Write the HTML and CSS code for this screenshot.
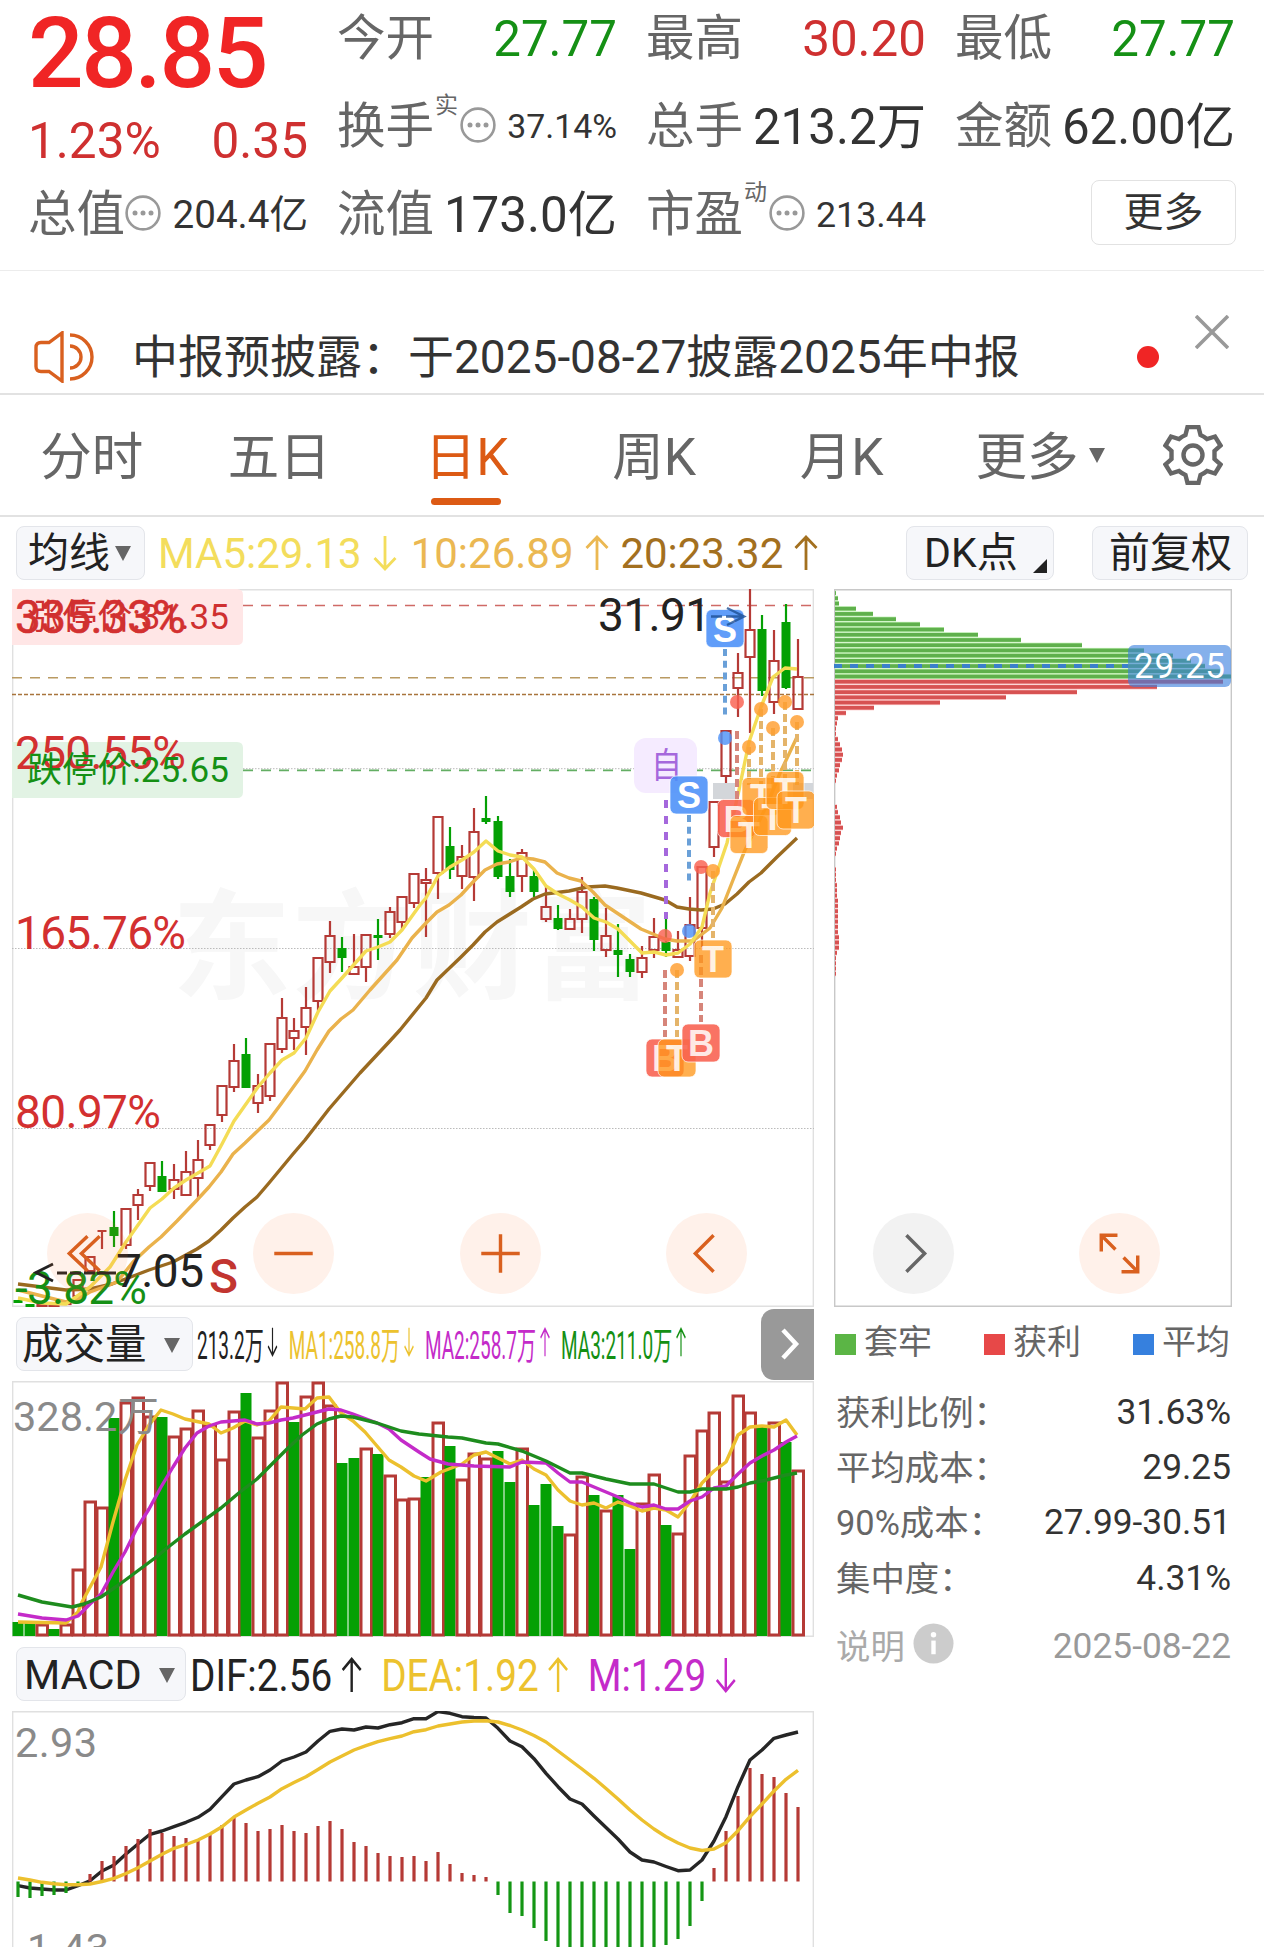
FILE: index.html
```html
<!DOCTYPE html>
<html lang="zh-CN">
<head>
    <meta charset="UTF-8">
    <meta name="viewport" content="width=device-width, initial-scale=1.0">
    <title>日K</title>
    <link rel="stylesheet" href="styles.css">
</head>
<body>
    <svg width="0" height="0" class="defs">
        <symbol id="dots" viewBox="0 0 36 36">
            <circle cx="18" cy="18" r="16.4" fill="none" stroke="#999" stroke-width="2.6"/>
            <circle cx="10" cy="18" r="2.5" fill="#999"/><circle cx="18" cy="18" r="2.5" fill="#999"/><circle cx="26" cy="18" r="2.5" fill="#999"/>
        </symbol>
        <symbol id="up" viewBox="0 0 24 36">
            <path d="M12 35V2M1.500 13L12 2L22.500 13" fill="none" stroke="currentColor" stroke-width="2.800"/>
        </symbol>
        <symbol id="down" viewBox="0 0 24 36">
            <path d="M12 1V34M1.500 23L12 34L22.500 23" fill="none" stroke="currentColor" stroke-width="2.800"/>
        </symbol>
    </svg>

    <!-- Quote -->
    <div class="quote">
        <div class="price-box">
            <div class="price">28.85</div>
            <div class="change"><span>1.23%</span><span>0.35</span></div>
        </div>
        <div class="cell"><span>今开</span><b class="green">27.77</b></div>
        <div class="cell"><span>最高</span><b class="red">30.20</b></div>
        <div class="cell"><span>最低</span><b class="green">27.77</b></div>
        <div class="cell"><span>换手</span><sup>实</sup><svg class="dots"><use href="#dots"/></svg><b class="v34">37.14%</b></div>
        <div class="cell"><span>总手</span><b>213.2万</b></div>
        <div class="cell"><span>金额</span><b>62.00亿</b></div>
        <div class="cell"><span>总值</span><svg class="dots"><use href="#dots"/></svg><b class="v38">204.4亿</b></div>
        <div class="cell"><span>流值</span><b>173.0亿</b></div>
        <div class="cell"><span>市盈</span><sup>动</sup><svg class="dots"><use href="#dots"/></svg><b class="v35">213.44</b></div>
        <div class="cell"><button class="more">更多</button></div>
    </div>

    <!-- Notice -->
    <div class="notice">
        <svg class="speaker" viewBox="0 0 60 52" fill="none" stroke="#d9601f" stroke-width="3.4">
            <path d="M28 2V50L15 40.500H7Q2 40.500 2 35.500V16.500Q2 11.500 7 11.500H15Z"/>
            <path d="M36 15A11 11 0 0 1 36 37M36 4A22 22 0 0 1 36 48"/>
        </svg>
        <span class="notice-text">中报预披露：于2025-08-27披露2025年中报</span>
        <i class="dot"></i>
        <svg class="close" viewBox="0 0 34 34"><path d="M1 1L33 33M33 1L1 33" stroke="#999" stroke-width="3.600"/></svg>
    </div>

    <!-- Period tabs -->
    <div class="tabs">
        <span>分时</span>
        <span>五日</span>
        <span class="active">日K</span>
        <span>周K</span>
        <span>月K</span>
        <span class="tab-more">更多<i class="tri"></i></span>
        <svg class="gear" viewBox="-30 -30 60 60" fill="none" stroke="#666" stroke-width="4.4">
            <path d="M-5.500 -28H5.500L7.500 -20Q11 -18.500 14 -16L22 -18.500L27.500 -9.500L21.500 -4V4L27.500 9.500L22 18.500L14 16Q11 18.500 7.500 20L5.500 28H-5.500L-7.500 20Q-11 18.500 -14 16L-22 18.500L-27.500 9.500L-21.500 4V-4L-27.500 -9.500L-22 -18.500L-14 -16Q-11 -18.500 -7.500 -20Z"/>
            <circle r="9.500"/>
        </svg>
    </div>

    <div class="ma-bar">
        <button class="pill pill-ma">均线<i class="tri"></i></button>
        <span class="ma5">MA5:29.13<svg class="arr"><use href="#down"/></svg></span>
        <span class="ma10">10:26.89<svg class="arr"><use href="#up"/></svg></span>
        <span class="ma20">20:23.32<svg class="arr"><use href="#up"/></svg></span>
        <button class="pill pill-dk">DK点<i class="corner"></i></button>
        <button class="pill pill-fq">前复权</button>
    </div>

    <div class="main">
        <div class="left">
            <svg id="kline" class="kline" viewBox="12 589 802 718"></svg>

            <div class="ind-bar">
                <button class="pill pill-vol">成交量<i class="tri"></i></button>
                <div class="vol-values">
                    <span class="c-black">213.2万<svg class="arr"><use href="#down"/></svg></span>
                    <span class="c-yellow">MA1:258.8万<svg class="arr"><use href="#down"/></svg></span>
                    <span class="c-purple">MA2:258.7万<svg class="arr"><use href="#up"/></svg></span>
                    <span class="c-green">MA3:211.0万<svg class="arr"><use href="#up"/></svg></span>
                </div>
                <div class="next"><svg viewBox="0 0 20 32"><path d="M3 2L16 16L3 30" fill="none" stroke="#fff" stroke-width="4.500"/></svg></div>
            </div>
            <svg id="volume" class="volume" viewBox="12 1381 802 256"></svg>

            <div class="ind-bar">
                <button class="pill pill-macd">MACD<i class="tri"></i></button>
                <div class="macd-values">
                    <span class="c-black">DIF:2.56<svg class="arr"><use href="#up"/></svg></span>
                    <span class="c-yellow">DEA:1.92<svg class="arr"><use href="#up"/></svg></span>
                    <span class="c-purple">M:1.29<svg class="arr"><use href="#down"/></svg></span>
                </div>
            </div>
            <svg id="macd" class="macd" viewBox="12 1711 802 236"></svg>
        </div>

        <div class="right">
            <svg id="chips" class="chips" viewBox="834 589 398 718"></svg>
            <div class="legend">
                <span><i class="sq sq-green"></i>套牢</span>
                <span><i class="sq sq-red"></i>获利</span>
                <span><i class="sq sq-blue"></i>平均</span>
            </div>
            <div class="row"><span>获利比例：</span><b>31.63%</b></div>
            <div class="row"><span>平均成本：</span><b>29.25</b></div>
            <div class="row"><span>90%成本：</span><b>27.99-30.51</b></div>
            <div class="row"><span>集中度：</span><b>4.31%</b></div>
            <div class="row row-note"><span>说明<svg class="info" viewBox="0 0 42 42"><circle cx="21" cy="21" r="20.500" fill="#ccc"/><circle cx="21" cy="12" r="2.800" fill="#fff"/><path d="M21 18V32" stroke="#fff" stroke-width="4.500"/></svg></span><b>2025-08-22</b></div>
        </div>

        <!-- Floating chart controls -->
        <div class="controls">
            <svg viewBox="-40 -40 80 80"><path d="M0 -17L-18 0L0 17M12 -17L-6 0L12 17"/></svg>
            <svg viewBox="-40 -40 80 80"><path d="M-19 0H19"/></svg>
            <svg viewBox="-40 -40 80 80"><path d="M-19 0H19M0 -19V19"/></svg>
            <svg viewBox="-40 -40 80 80"><path d="M7 -18L-11 0L7 18"/></svg>
            <svg class="gray" viewBox="-40 -40 80 80"><path d="M-7 -18L11 0L-7 18"/></svg>
            <svg viewBox="-40 -40 80 80"><path d="M-18 -2V-18H-2M-18 -18L-4 -4M18 2V18H2M18 18L4 4"/></svg>
        </div>
    </div>

    <script src="charts.js"></script>
</body>
</html>
```
FILE: styles.css
```css
* { box-sizing: border-box; }
body { margin: 0; width: 1264px; height: 1947px; overflow: hidden; background: #fff; color: #333; font-family: Roboto, 'Noto Sans CJK SC', sans-serif; }
b { font-weight: 400; }
button { font-family: inherit; padding: 0; }
svg { display: block; flex: none; }
.defs { position: absolute; }
.green { color: #159015; }
.red { color: #cf3030; }

.quote { display: grid; grid-template-columns: repeat(4, 280px); grid-template-rows: 78px 97px 80px; column-gap: 29px; padding: 0 29px 15px 28px; height: 271px; border-bottom: 1px solid #ececec; }
.price-box { grid-row: 1 / 3; color: #f02525; }
.price { height: 105px; line-height: 108px; font-size: 98px; font-weight: 500; letter-spacing: -2.4px; white-space: nowrap; }
.change { display: flex; justify-content: space-between; color: #cf3030; font-size: 49.5px; line-height: 72px; }
.cell { display: flex; align-items: center; font-size: 49.3px; line-height: 70px; white-space: nowrap; }
.cell span { color: #666; font-size: 48.5px; }
.cell b { margin-left: auto; }
.cell sup { align-self: flex-start; color: #666; font-size: 23px; line-height: 30px; margin: 13px 2px 0 1px; }
.cell:nth-child(n+9) sup { margin-top: 3px; }
.dots { width: 36px; height: 36px; margin-top: -4px; }
.cell .v34 { font-size: 33.8px; }
.cell .v35 { font-size: 35.8px; }
.cell .v38 { font-size: 38.6px; }
.more { width: 145px; height: 65px; margin: -5px -1px 0 auto; border: 1.5px solid #e2e2e2; border-radius: 8px; background: #fff; color: #333; font-size: 40px; line-height: 60px; }

.notice { display: flex; align-items: center; height: 124px; padding: 49px 0 0 34px; border-bottom: 2px solid #e2e2e2; }
.speaker { width: 60px; height: 52px; }
.notice-text { flex: 0 0 1004px; margin: -7px 0 0 38px; padding-right: 1px; font-size: 46px; white-space: nowrap; }
.dot { width: 22px; height: 22px; margin-left: 1px; border-radius: 50%; background: #f02525; }
.close { width: 34px; height: 34px; margin: -50px 0 0 36px; }

.tabs { display: flex; align-items: center; height: 122px; border-bottom: 2px solid #e2e2e2; color: #666; font-size: 51.5px; }
.tabs span { position: relative; left: -2px; flex: 0 0 187.5px; line-height: 119px; padding-top: 5px; text-align: center; }
.tabs .active { color: #dc5a14; }
.active::after { content: ""; position: absolute; left: 58px; top: 105px; width: 70px; height: 7px; border-radius: 4px; background: #dc5a14; }
.tabs .tab-more { flex-basis: 209px; }
.tri { display: inline-block; border: 8.5px solid transparent; border-top: 15px solid #666; border-bottom: 0; }
.tab-more .tri { margin-left: 10px; vertical-align: 12px; }
.gear { width: 60px; height: 60px; margin-left: 16px; }

.ma-bar { display: flex; align-items: center; height: 72px; padding: 0 16px; font-size: 42px; white-space: nowrap; }
.ma-bar span { display: flex; align-items: center; }
.arr { width: 24px; height: 36px; margin-left: 11px; }
.ma5 { color: #f3dd5c; margin-left: 13px; width: 253px; }
.ma10 { color: #ebb852; width: 210px; }
.ma20 { color: #a3701f; width: 286px; }
.pill { flex: none; display: flex; align-items: center; height: 54px; border: 1.5px solid #e3e5ea; border-radius: 8px; background: #f6f7fa; color: #222; font-size: 41px; line-height: 50px; white-space: nowrap; }
.pill-ma { width: 129px; padding-left: 11px; }
.pill-ma .tri { margin-left: 5px; }
.pill-dk { position: relative; width: 148px; padding-left: 17px; }
.corner { position: absolute; right: 6px; bottom: 6px; border-left: 14px solid transparent; border-bottom: 14px solid #222; }
.pill-fq { width: 156px; padding-left: 16px; margin-left: 38px; }

.main { position: relative; display: flex; }
.left { width: 802px; margin-left: 12px; }
.right { width: 398px; margin-left: 20px; }
.kline { width: 802px; height: 718px; }
.volume { width: 802px; height: 256px; }
.macd { width: 802px; height: 236px; }
.chips { width: 398px; height: 718px; }

.ind-bar { display: flex; align-items: center; height: 74px; white-space: nowrap; }
.ind-bar .pill { margin-left: 4px; padding-top: 2px; }
.pill-vol { width: 177px; padding-left: 5px; font-size: 41.5px; }
.pill-vol .tri { margin-left: 17px; }
.pill-macd { width: 170px; padding-left: 7px; font-size: 41.5px; }
.pill-macd .tri { margin-left: 17px; }
.vol-values, .macd-values { display: flex; width: 0; flex: none; transform-origin: left center; }
.vol-values { margin: -4px 0 0 4px; transform: scaleX(.5); font-size: 38px; }
.macd-values { margin: 2px 0 0 4px; transform: scaleX(.86); font-size: 45px; }
.vol-values span, .macd-values span { display: flex; align-items: center; flex: none; }
.vol-values .arr { height: 30px; margin: 0 20px 0 6px; }
.macd-values .arr { margin: 0 22px 0 11px; }
.c-black { color: #222; }
.c-yellow { color: #ecc22e; }
.c-purple { color: #c42bc9; }
.c-green { color: #149014; }
.next { display: flex; align-items: center; justify-content: center; width: 53px; height: 71px; margin-left: auto; padding-left: 4px; border-radius: 13px 0 0 13px; background: #999; }
.next svg { width: 20px; height: 32px; }

.legend { display: flex; justify-content: space-between; height: 77px; line-height: 70px; font-size: 34px; color: #666; padding: 0 2px 0 1px; }
.sq { display: inline-block; width: 21px; height: 21px; margin-right: 8px; vertical-align: -1px; }
.sq-green { background: #5bb545; }
.sq-red { background: #e74848; }
.sq-blue { background: #3680de; }
.row { display: flex; justify-content: space-between; align-items: center; height: 55.3px; padding: 0 1px 0 2px; font-size: 34.4px; color: #666; }
.row b { color: #333; font-size: 35.3px; }
.row span { display: flex; align-items: center; margin-top: -4px; }
.row-note { height: 81px; color: #aaa; }
.row-note b { color: #999; }
.info { width: 41px; height: 41px; margin-left: 8px; }

.controls { position: absolute; left: 47px; top: 624px; width: 1113px; display: flex; justify-content: space-between; }
.controls svg { width: 81px; height: 81px; border-radius: 50%; background: rgba(255, 120, 50, .1); fill: none; stroke: #d9601f; stroke-width: 3.4; }
.controls .gray { background: #f2f2f2; stroke: #666; }

/* chart texts */
.pct { font-size: 46px; fill: #d33030; }
.axis { font-size: 41.5px; fill: #8a8a8a; }
.tag { font-size: 35px; }
.mark { font-size: 46px; fill: #222; }
.badge { font: 700 36px 'Liberation Sans', sans-serif; fill: #fff; text-anchor: middle; }
.watermark { font-size: 119px; font-weight: 700; fill: #f7f7f7; }
```
FILE: charts.js
```js
const RED = '#b53a36', GREEN = '#04a004';
const X0 = 18, STEP = 12;
const cx = i => X0 + STEP * i;

const line = (pts, color, w = 3.4) =>
    `<polyline points="${pts}" fill="none" stroke="${color}" stroke-width="${w}" stroke-linejoin="round"/>`;
const hline = (x1, x2, y, color, dash, w = 1) =>
    `<path d="M${x1} ${y}H${x2}" stroke="${color}" stroke-width="${w}" stroke-dasharray="${dash}"/>`;
const vdash = (x, y1, y2, color, dash = '8 4') =>
    `<path d="M${x} ${y1}V${y2}" stroke="${color}" stroke-width="4" stroke-dasharray="${dash}"/>`;
const text = (x, y, cls, s, extra = '') => `<text x="${x}" y="${y}" class="${cls}" ${extra}>${s}</text>`;

// [colour, body top, body bottom, high, low]
const candles = [
    ['g',1300,1303,1300,1303],['g',1304,1307,1304,1307],['r',1305,1306,1305,1306],['r',1305,1306,1305,1306],['r',1303,1304,1303,1304],
    ['r',1280,1296,1279,1297],['r',1257,1271,1256,1271],['r',1231,1231,1231,1249],['g',1227,1236,1211,1247],['r',1209,1245,1208,1249],
    ['r',1195,1205,1189,1220],['r',1163,1186,1163,1191],['g',1176,1192,1161,1192],['r',1180,1189,1164,1199],['r',1172,1195,1151,1195],
    ['r',1160,1178,1140,1200],['r',1125,1145,1125,1150],['r',1086,1115,1086,1122],['r',1061,1087,1044,1092],['g',1054,1088,1038,1088],
    ['r',1086,1103,1074,1113],['r',1044,1096,1044,1101],['r',1018,1049,998,1053],['r',1031,1038,1018,1050],['r',1008,1027,987,1055],
    ['r',958,1001,958,1011],['r',936,962,921,973],['g',948,958,937,972],['r',967,974,934,974],['r',935,967,935,982],
    ['g',935,938,919,960],['r',912,934,907,938],['r',897,922,896,930],['r',874,903,874,908],['r',880,883,868,937],
    ['r',817,873,817,899],['g',846,870,827,879],['r',857,876,845,889],['r',832,877,808,901],['g',818,822,796,824],
    ['g',821,877,816,879],['g',876,892,859,897],['r',853,876,849,892],['g',876,892,869,897],['r',907,919,886,922],
    ['g',918,929,905,930],['r',919,929,909,929],['r',892,919,877,933],['g',899,940,897,951],['r',936,950,908,957],
    ['g',950,955,924,977],['g',959,972,954,977],['r',958,972,946,978],['r',937,950,918,958],['g',942,951,919,957],
    ['r',950,957,931,957],['r',925,956,897,961],['r',867,928,867,947],['r',802,847,802,857],['r',731,776,730,783],
    ['r',673,688,653,717],['r',630,657,589,733],['g',629,691,615,696],['r',661,702,630,714],['g',622,688,604,689],['r',677,709,639,709]
];

function drawKline() {
    let s = `<path d="M12.500 1307V589.500H813.500V1306.500H12" fill="none" stroke="#e0e0e0" stroke-width="1.800"/>`;
    s += text(172, 990, 'watermark', '东方财富', 'textLength="480"');
    for (const y of [768.7, 948.5, 1128.5]) s += hline(12, 814, y, '#bbb', '1.5 1.5');
    s += `<path d="M12 589H237Q243 589 243 595V639Q243 645 237 645H12Z" fill="#ffe6e6"/>`;
    s += `<path d="M12 742H237Q243 742 243 748V792Q243 798 237 798H12Z" fill="#e2f3e4"/>`;
    s += hline(243, 814, 605.5, '#cf6a66', '10 8', 1.5);
    s += hline(12, 814, 677.7, '#b99a62', '10 8', 1.5);
    s += hline(12, 814, 694.5, '#a8743c', '4 2', 1.3);
    s += hline(243, 814, 770.3, '#63ae63', '10 8', 1.8);
    s += `<path d="M713 783H735V799H713ZM793 783H813V799H793Z" fill="#d3d6da"/>`;
    s += `<rect x="634" y="738" width="63" height="55" rx="12" fill="#f5ebff"/>`;
    s += text(651, 778, 'tag', '自', 'fill="#a568dc" textLength="31" lengthAdjust="spacingAndGlyphs"');

    candles.forEach(([c, top, bottom, high, low], i) => {
        const x = cx(i);
        if (c === 'g') {
            s += `<path d="M${x} ${high}V${low}" stroke="${GREEN}" stroke-width="2.2"/><rect x="${x - 4.5}" y="${top}" width="9" height="${bottom - top}" fill="${GREEN}"/>`;
        } else {
            s += `<path d="M${x} ${high}V${top}M${x} ${bottom}V${low}M${x - 4.5} ${top}H${x + 4.5}V${bottom}H${x - 4.5}Z" fill="none" stroke="${RED}" stroke-width="2.2"/>`;
        }
    });

    // MA20, MA10, MA5
    s += line('18,1284 42,1287 66,1290 90,1289 112,1284 136,1275 149,1270 173,1262 197,1249 209,1241 221,1230 233,1218 245,1207 257,1197 269,1183 293,1154 305,1140 329,1109 360,1073 389,1042 400,1030 426,998 437,980 461,957 473,945 485,932 497,922 521,907 533,899 545,894 569,891 587,887 605,886 617,888 641,893 665,900 677,907 689,909 701,910 713,909 725,904 737,894 749,882 761,873 777,857 797,838', '#9a6a20');
    s += line('18,1290 42,1296 66,1302 78,1299 90,1292 117,1282 133,1262 149,1247 161,1237 177,1221 197,1200 209,1187 221,1172 233,1154 245,1143 269,1120 281,1104 305,1071 317,1050 329,1031 341,1019 353,1010 370,990 397,960 412,938 426,923 437,912 449,905 461,895 473,882 485,870 497,864 509,862 521,858 533,859 545,862 557,873 569,878 581,881 593,892 605,905 617,913 629,921 641,929 653,934 665,939 677,941 693,941 710,928 722,908 733,880 745,850 767,805 780,773 797,737', '#eab24c');
    s += line('18,1298 42,1303 66,1304 90,1287 110,1267 126,1242 150,1208 162,1199 174,1188 186,1180 210,1166 222,1144 234,1121 246,1104 258,1087 270,1073 282,1060 294,1053 306,1038 318,1012 330,991 342,978 358,960 366,951 378,947 390,942 402,930 420,905 426,898 438,876 450,867 462,860 474,852 486,841 498,851 510,855 522,857 534,869 546,886 558,894 570,900 582,907 594,918 606,922 618,929 630,941 642,953 654,952 666,955 678,953 690,944 702,927 710,893 727,843 739,790 749,742 761,707 773,677 785,668 797,669', '#f4dc55');

    s += text(15, 633, 'pct', '335.33%', 'textLength="171" stroke="#d33030" stroke-width=".6"');
    s += text(27, 629, 'tag', '涨停价:31.35', 'fill="#cf3030" textLength="202"');
    s += text(15, 769, 'pct', '250.55%', 'textLength="171"');
    s += text(27, 782, 'tag', '跌停价:25.65', 'fill="#159015" textLength="202"');
    s += text(15, 948.6, 'pct', '165.76%', 'textLength="171"');
    s += text(15, 1128, 'pct', '80.97%', 'textLength="146"');
    s += text(15, 1303.5, 'pct', '-3.82%', 'style="fill:#159015" textLength="132"');

    // stems from candle to badge
    s += vdash(666, 800, 919, '#a568dc', '8 8');
    s += vdash(689, 815, 882, '#6aa0d8', '7 4.7') + vdash(725, 649, 716, '#6aa0d8', '7 4.7');
    s += vdash(737, 731, 800, '#d6857a') + vdash(665, 970, 1037, '#d6857a') + vdash(701, 955, 1022, '#d6857a');
    s += vdash(677, 970, 1037, '#e4b46a') + vdash(713, 871, 938, '#e4b46a');
    [[749,747],[761,709],[773,728],[785,702],[797,722]].forEach(([x, y]) => s += vdash(x, y, 785, '#e4b46a'));
    const dots = { '#f9604f': [[737,702],[701,867],[665,936]], '#ff9d2e': [[749,747],[761,709],[773,728],[785,702],[797,722],[713,871],[677,970]], '#4f93f7': [[725,738],[689,931]] };
    for (const color in dots) dots[color].forEach(([x, y]) => s += `<circle cx="${x}" cy="${y}" r="7" fill="${color}" opacity=".82"/>`);

    s += text(598, 631, 'mark', '31.91', 'textLength="113"');
    s += `<path d="M53 1264L36 1272.500L53 1281M57 1273H67M70 1273H81M84 1273H95M97 1273H116" fill="none" stroke="#222" stroke-width="2.800"/>`;
    s += text(116, 1287, 'mark', '7.05', 'textLength="88"');
    s += text(209, 1293, 'mark', 'S', 'style="fill:#c23530;font-weight:500;font-size:48px"');

    const fill = { B: '#f8604f', T: '#ff9618', S: '#4a90f8' };
    [['B',665,1058],['T',677,1058],['B',701,1043],['T',713,959],['B',736.5,818.500],['T',749,834.500],['T',761,796.500],['T',772.500,816.500],
     ['T',785,790.500],['T',796,810],['S',689,795],['S',725,628.500]].forEach(([c, x, y]) => {
        s += `<rect x="${x - 19}" y="${y - 19}" width="38" height="38" rx="6" fill="${fill[c]}" fill-opacity="${c === 'T' ? .76 : .88}" stroke="#fff" stroke-opacity=".7"/>`;
        s += text(x, y + 13, 'badge', c, `fill-opacity="${c === 'S' ? 1 : .85}"`);
    });
    s += `<path d="M711 616.500H722M726 616.500H744M727 608L744 616.500L727 625" fill="none" stroke="#1d4f94" stroke-width="2.500" stroke-opacity=".8"/>`;
    document.getElementById('kline').innerHTML = s;
}

function drawVolume() {
    const kinds = 'ggrgrrrrgrrrgrrrrrrgrrrgrrrggrgrrrgrgrrrggrggg' + 'rrgrggrrgrrrrrrrgrgr';
    const tops = [1622,1623,1624,1629,1624,1569,1501,1507,1418,1402,1397,1416,1417,1436,1428,1410,1425,1459,1411,1393,1437,1410,1382,
        1422,1396,1382,1405,1463,1458,1448,1454,1475,1499,1498,1477,1422,1446,1479,1453,1458,1451,1482,1448,1505,1484,1526,1534,1476,
        1495,1510,1495,1549,1503,1474,1525,1533,1455,1430,1412,1481,1395,1412,1427,1422,1442,1470];
    // i = 45 and 46 onward follow the second half of kinds
    let s = `<path d="M12.500 1381V1637M12 1381.500H813.500V1636.500H12" fill="none" stroke="#e0e0e0" stroke-width="1.800"/>`;
    tops.forEach((y, i) => {
        const x = cx(i);
        s += kinds[i] === 'g'
            ? `<rect x="${x - 5.5}" y="${y}" width="11" height="${1636 - y}" fill="${GREEN}"/>`
            : `<rect x="${x - 5}" y="${y + 1}" width="10.500" height="${1634 - y}" fill="#fff" stroke="${RED}" stroke-width="3"/>`;
    });
    s += line('18,1622 66,1623 78,1612 82,1602 101,1567 113,1522 125,1480 137,1445 149,1425 161,1410 173,1414 185,1419 209,1424 221,1433 233,1428 245,1421 257,1425 269,1421 281,1407 305,1409 317,1398 329,1397 341,1413 353,1421 365,1432 389,1460 401,1467 414,1476 426,1481 441,1472 462,1464 474,1455 486,1452 498,1458 510,1464 522,1460 534,1469 546,1475 558,1490 570,1501 582,1505 594,1503 606,1508 618,1502 630,1506 642,1511 654,1508 666,1510 678,1517 690,1502 702,1483 714,1471 726,1462 738,1435 750,1427 762,1426 774,1427 786,1420 797,1435', '#ecc02e');
    s += line('18,1614 42,1618 66,1620 78,1616 90,1604 101,1594 113,1572 125,1552 137,1528 149,1509 161,1487 173,1467 185,1448 197,1433 209,1426 221,1422 245,1420 257,1424 269,1423 281,1420 293,1418 317,1412 329,1409 341,1410 353,1414 377,1423 389,1429 401,1440 419,1452 430,1459 448,1464 474,1466 510,1467 522,1462 546,1463 558,1473 570,1482 582,1482 606,1492 618,1497 630,1503 642,1507 654,1505 666,1509 678,1509 690,1501 702,1497 714,1488 726,1486 738,1474 750,1463 762,1456 774,1450 786,1442 797,1436', '#c42bc9');
    s += line('18,1595 42,1602 72,1607 84,1604 101,1597 120,1584 155,1558 167,1548 185,1534 221,1508 240,1492 257,1479 287,1449 302,1435 317,1424 329,1419 341,1416 353,1417 377,1423 401,1431 419,1434 448,1437 462,1438 486,1443 498,1444 522,1451 546,1461 570,1473 582,1473 606,1479 630,1484 654,1484 678,1492 690,1492 702,1489 726,1489 738,1487 750,1483 762,1481 786,1475 797,1473', '#1e8c1e');
    s += text(13, 1431, 'axis', '328.2万', 'textLength="146"');
    document.getElementById('volume').innerHTML = s;
}

function drawMacd() {
    const ends = [1897,1898,1896,1895,1893,1885,1874,1861,1856,1846,1839,1829,1833,1836,1838,1840,1835,1825,1817,1823,1831,1829,1825,
        1831,1833,1826,1821,1829,1842,1846,1853,1856,1857,1856,1861,1852,1864,1873,1875,1877,1895,1913,1916,1928,1941,1950,1950,1950,
        1950,1950,1950,1950,1950,1950,1945,1939,1926,1901,1868,1831,1796,1768,1774,1777,1793,1807];
    // values per candle: DIF (black) and DEA (yellow)
    const dif = [1885.7,1888,1889,1890,1890,1885.7,1880.7,1871,1865,1854,1844,1834.3,1831,1826.7,1822.3,1817.3,1809.3,1796.7,1784,1780,
        1776.7,1770,1761,1757,1752,1741,1731.3,1729,1730,1727,1728,1724.7,1722.7,1718.7,1718.7,1711.5,1713.3,1716.7,1717.5,1718,1728.3,
        1741,1746.7,1758.7,1773.3,1786.7,1799,1804,1816,1827.5,1839,1852,1860,1862,1866.5,1870.7,1870,1860,1841,1816.7,1786.7,1760,
        1750,1738.3,1735,1732];
    const dea = [1878,1880,1882.3,1883.7,1884.7,1884.7,1884,1881.5,1878.3,1873.5,1867.7,1861,1854.3,1848.3,1844.5,1840,1834,1826.7,1817,
        1810,1803.3,1797,1788.7,1782.5,1776.7,1769.5,1762,1756,1750,1745.7,1741.7,1738.7,1736,1731.7,1729.7,1726,1724,1722,1721,1720.7,
        1722,1725.5,1730,1735.500,1742,1751,1760,1769,1778.3,1788.500,1799,1810,1820,1829,1836.7,1843,1848,1850.500,1849,1842.7,1830.7,
        1816.7,1804,1791,1779.3,1770.3];
    let s = `<path d="M12.500 1950V1711.500H813.500V1950" fill="none" stroke="#e0e0e0" stroke-width="1.800"/>`;
    const curve = (v, color) => line(v.map((y, i) => cx(i) + ',' + y).join(' '), color);
    s += curve(dif, '#262626');
    ends.forEach((y, i) => s += `<path d="M${cx(i)} 1881.500V${y}" stroke="${y > 1882 ? '#149614' : RED}" stroke-width="3.200"/>`);
    s += curve(dea, '#ecc02e');
    s += text(15, 1757, 'axis', '2.93', 'textLength="82"');
    s += text(15, 1963, 'axis', '-1.43', 'textLength="94"');
    document.getElementById('macd').innerHTML = s;
}

function drawChips() {
    const widths = [1,3,4,21,38,61,85,109,143,186,247,309,338,356,370,385,396,388,322,242,171,105,39,11,3,2,1,1,3,5,7,8,7,5,4,2,1,
        0,0,0,0,2,3,5,6,8,6,5,4,2,1,0,0,1,1,1,2,2,2,3,3,3,3,3,3,3,4,4,4,2,1,1,1,1];
    let s = `<path d="M834.500 1307V589.500H1231.500V1306.500H834" fill="none" stroke="#c8c8c8" stroke-width="1.800"/>`;
    widths.forEach((w, k) => {
        if (!w) return;
        const y = 591.2 + k * 5.215;
        s += `<rect x="835" y="${y - .7}" width="${w}" height="5.100" fill="${k < 17 ? '#c5f3b8' : '#fbc4c4'}"/>`;
        s += `<rect x="835" y="${y}" width="${w}" height="3.700" fill="${k < 17 ? '#5fb04c' : '#d75252'}"/>`;
    });
    s += `<path d="M834 666H1128" stroke="#3b80cc" stroke-width="4" stroke-dasharray="8 8"/>`;
    s += `<rect x="1128" y="645" width="103" height="42" rx="6" fill="#3a7fdf" fill-opacity=".62"/>`;
    s += text(1134, 678, 'tag', '29.25', 'fill="#fff" textLength="91"');
    document.getElementById('chips').innerHTML = s;
}

drawKline();
drawVolume();
drawMacd();
drawChips();
```
